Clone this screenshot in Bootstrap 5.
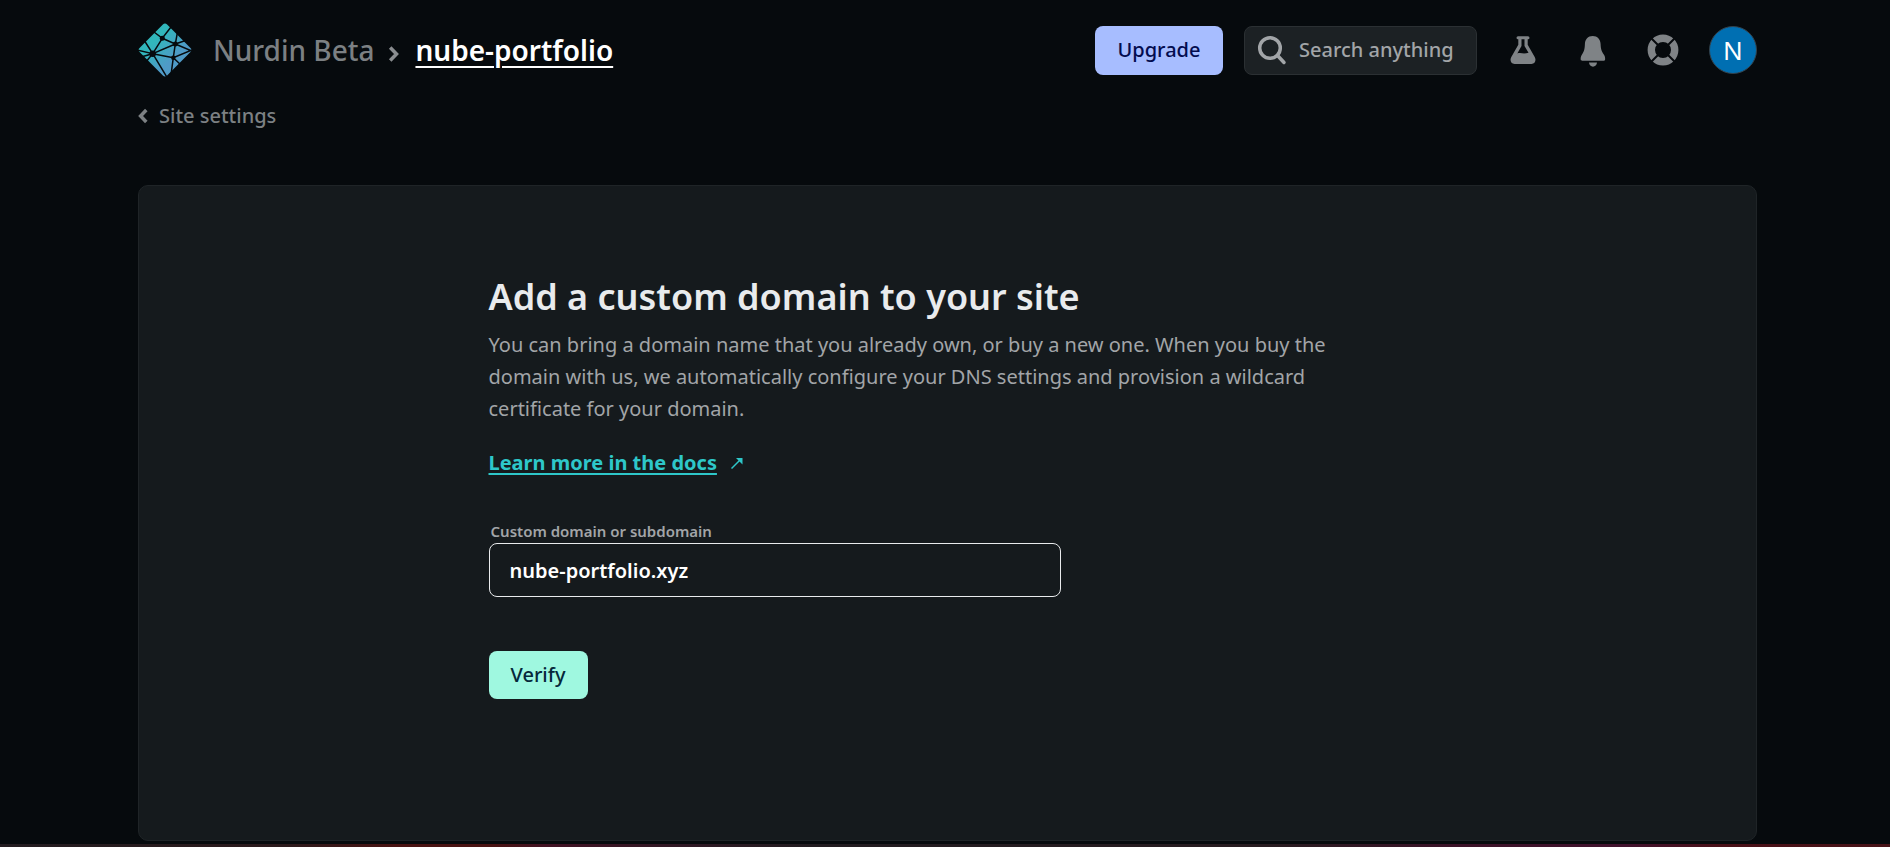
<!DOCTYPE html>
<html lang="en">
<head>
<meta charset="utf-8">
<meta name="viewport" content="width=device-width, initial-scale=1">
<title>Add a custom domain</title>
<link rel="stylesheet" href="https://cdn.jsdelivr.net/npm/bootstrap@5.3.0/dist/css/bootstrap.min.css">
<style>
  body { background: #060a0d; color: #a2a5a8; font-family: "Noto Sans", sans-serif; font-size: 20px; line-height: 32px; }
  .page-shell { padding-left: 138px; padding-right: 133px; }
  .top-bar { min-height: 100px; }
  .crumb { font-size: 28px; line-height: 40px; font-weight: 500; }
  .crumb a { color: #7c8083; text-decoration: none; }
  .crumb a.current { color: #fff; font-weight: 600; text-decoration: underline; text-decoration-thickness: 2px; text-underline-offset: 5px; }
  .crumb-logo { margin-right: 21px; }
  .crumb-sep { margin: 8px 15px 0 14px; }
  .btn { --bs-btn-border-radius: 8px; --bs-btn-font-size: 20px; --bs-btn-font-weight: 500; --bs-btn-line-height: 32px; --bs-btn-font-family: inherit; }
  .btn-upgrade { --bs-btn-bg: #a7bdff; --bs-btn-color: #030c4f; --bs-btn-hover-bg: #bfd0ff; height: 49px; width: 128px; }
  .btn-search { --bs-btn-bg: #1c2124; --bs-btn-color: #a2a5a8; --bs-btn-border-color: #2b3033; --bs-btn-hover-color: #fff; height: 49px; width: 233px; padding: 0 12px; gap: 12px; margin: 0 30px 0 21px; }
  .icon-row { gap: 38px; margin-right: 30px; }
  .icon-row .btn { --bs-btn-border-width: 0; --bs-btn-color: #7f8386; --bs-btn-hover-color: #fff; width: 32px; height: 32px; }
  .icon-row svg { overflow: visible; }
  .avatar { width: 48px; height: 48px; background: #006fb2; color: #fff; font-size: 26px; border: 1px solid #33424c; }
  .back-link { color: #7c8083; text-decoration: none; font-weight: 500; gap: 10px; margin-bottom: 53px; }
  .panel { background: #151a1d; border: 1px solid #1f2427; border-radius: 10px; padding: 89px 24px 141px; margin-bottom: 3px; }
  .panel-body { max-width: 918px; }
  .panel h1 { font-size: 36px; line-height: 44px; font-weight: 600; color: #e9ebed; margin-bottom: 10px; }
  .intro { margin-bottom: 22px; }
  .docs-link { color: #2ec7c9; gap: 14px; }
  .docs-link span { font-weight: 700; text-decoration: underline; text-decoration-thickness: 2px; text-underline-offset: 3px; }
  .domain-form { margin-top: 42px; }
  .field-label { font-size: 15px; line-height: 20px; font-weight: 600; margin: 0 2px 2px; }
  .domain-input, .domain-input:focus { background: transparent; color: #fff; border: 1px solid #e9ebed; border-radius: 8px; height: 54px; font-size: 20px; font-weight: 600; padding: 0 20px; max-width: 572px; box-shadow: none; margin-bottom: 54px; }
  .btn-verify { --bs-btn-bg: #9ff8e0; --bs-btn-color: #05273a; --bs-btn-hover-bg: #c0ffee; height: 48px; width: 99px; }
  .glow-line { height: 3px; background: linear-gradient(90deg, #231c20, #2c1a1c 15%, #4a1312 21%, #4a1312 26%, #421224 29%, #301824 36%, #221c20 43%, #281c20 67%, #3c1228 77%, #42122e 86%, #4a1018 91%, #471317); }
</style>
</head>
<body>
<div class="page-shell">
  <header class="top-bar d-flex align-items-center justify-content-between">
    <nav class="crumb d-flex align-items-center" aria-label="Breadcrumb">
      <a href="#" class="crumb-logo" aria-label="Home">
        <svg class="d-block" width="54" height="54" viewBox="0 0 54 54">
          <defs><linearGradient id="lg" x1="0" y1="0" x2="1" y2="0"><stop offset=".15" stop-color="#31b7bb"/><stop offset=".8" stop-color="#4f9ac7"/></linearGradient></defs>
          <rect x="7.500" y="7.500" width="39" height="39" rx="3" transform="rotate(45 27 27)" fill="url(#lg)"/>
          <g stroke="#060a0d" stroke-width="1.500" fill="none"><path d="M16 9 24.300 15.300 33 4M24.300 15.300 37.300 21 54 28M24.300 15.300 14.700 30.700 37.300 21 49 17M6 17 14.700 30.700-1 27M3 34 14.700 30.700 7 40M14.700 30.700 30 56M14.700 30.700 35.300 34.700 54 27M39.500 9 37.300 21 35.300 34.700 33 52M35.300 34.700 43 42"/></g>
          <g fill="#060a0d"><circle cx="24.300" cy="15.300" r="2.500"/><circle cx="14.700" cy="30.700" r="3.200"/><circle cx="37.300" cy="21" r="2.500"/><circle cx="35.300" cy="34.700" r="2.200"/></g>
        </svg>
      </a>
      <a href="#">Nurdin Beta</a>
      <svg class="crumb-sep" width="12" height="16" viewBox="0 0 12 16" fill="none" stroke="#8a8d90" stroke-width="3.500"><path d="m2.200 1.500 6.300 6.500-6.300 6.500"/></svg>
      <a href="#" class="current">nube-portfolio</a>
    </nav>
    <div class="d-flex align-items-center">
      <button type="button" class="btn btn-upgrade p-0">Upgrade</button>
      <button type="button" class="btn btn-search d-flex align-items-center">
        <svg width="30" height="30" viewBox="0 0 30 30" fill="none" stroke="currentColor" stroke-width="3.500" stroke-linecap="round"><circle cx="13" cy="13" r="10.300"/><path d="m20.500 20.500 6.500 7"/></svg>
        <span>Search anything</span>
      </button>
      <div class="icon-row d-flex">
        <button type="button" class="btn p-0" aria-label="Labs">
          <svg class="d-block" width="32" height="32" viewBox="0 0 32 32" fill="currentColor"><path fill-rule="evenodd" d="M11 2.200h10a1.500 1.500 0 0 1 0 3h-.3v5.600l7 12.200c1.800 3.200.4 7-3.200 7H7.500c-3.600 0-5-3.800-3.200-7l7-12.200V5.200H11a1.500 1.500 0 0 1 0-3ZM14.500 5.200v6.800L10.300 19.600c3.400-1.400 6 .8 11.200-.9l-4-6.700V5.200Z"/></svg>
        </button>
        <button type="button" class="btn p-0" aria-label="Notifications">
          <svg class="d-block" width="32" height="32" viewBox="0 0 32 32" fill="currentColor"><path d="M15.700 2C20.500 2 23.400 5.500 23.600 10c.2 5 .8 7 3.200 10.500 1.200 1.800 1.500 3.500 1.300 5 0 .8-.6 1.200-1.300 1.200H5c-.8 0-1.300-.4-1.300-1.200-.2-1.500.2-3.200 1.300-5C7.300 17 7.700 15 7.900 10c.2-4.500 3-8 7.800-8ZM12 28.600h8c-.3 5.400-7.700 5.400-8 0Z"/></svg>
        </button>
        <button type="button" class="btn p-0" aria-label="Help">
          <svg class="d-block" width="32" height="32" viewBox="0 0 32 32" fill="none"><circle cx="16" cy="16" r="11.700" stroke="currentColor" stroke-width="7.400"/><path d="m4 4 7 7m10 10 7 7M28 4l-7 7M11 21l-7 7" stroke="#060a0d" stroke-width="2"/></svg>
        </button>
      </div>
      <button type="button" class="avatar rounded-circle p-0" aria-label="Account N">N</button>
    </div>
  </header>
  <div class="d-flex">
    <a href="#" class="back-link d-flex align-items-center">
      <svg width="11" height="16" viewBox="0 0 11 16" fill="none" stroke="currentColor" stroke-width="3.500"><path d="M8.300 2 2.600 8l5.700 6"/></svg>
      Site settings
    </a>
  </div>
  <main class="panel">
    <div class="panel-body mx-auto">
      <h1>Add a custom domain to your site</h1>
      <p class="intro pe-3">You can bring a domain name that you already own, or buy a new one. When you buy the domain with us, we automatically configure your DNS settings and provision a wildcard certificate for your domain.</p>
      <div class="d-flex">
        <a href="#" class="docs-link d-flex align-items-center text-decoration-none">
          <span>Learn more in the docs</span>
          <svg width="12" height="12" viewBox="0 0 12 12" fill="none" stroke="currentColor" stroke-width="1.500"><path d="M.5 11.500 9 3"/><path d="M5 1h6.500v6.500Z" fill="currentColor" stroke="none"/></svg>
        </a>
      </div>
      <form class="domain-form">
        <label class="field-label d-block" for="domain">Custom domain or subdomain</label>
        <input class="form-control domain-input" id="domain" type="text" value="nube-portfolio.xyz">
        <button type="button" class="btn btn-verify d-block p-0">Verify</button>
      </form>
    </div>
  </main>
</div>
<div class="glow-line"></div>
<script src="https://cdn.jsdelivr.net/npm/bootstrap@5.3.0/dist/js/bootstrap.bundle.min.js"></script>
</body>
</html>
